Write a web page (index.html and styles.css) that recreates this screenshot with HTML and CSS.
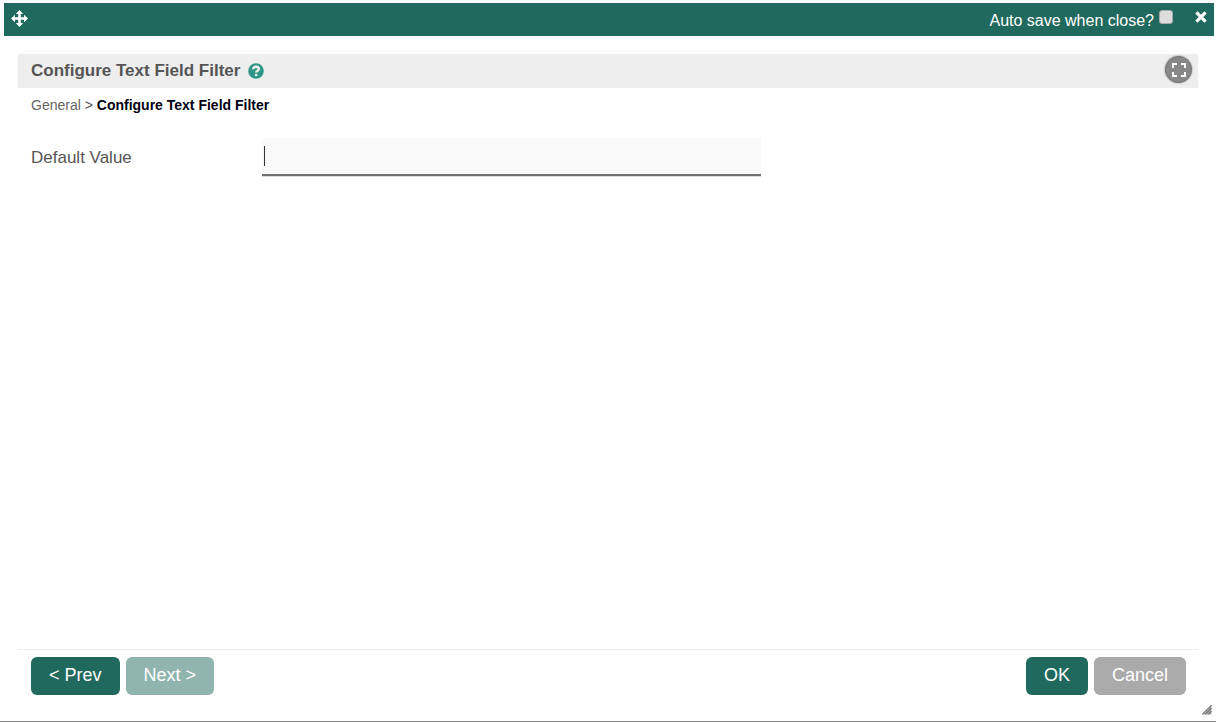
FILE: index.html
```html
<!DOCTYPE html>
<html lang="en">
  <head>
    <meta charset="UTF-8" />
    <meta name="viewport" content="width=device-width, initial-scale=1.0" />
    <title>Configure Text Field Filter</title>
    <link rel="stylesheet" href="styles.css">
  </head>
  <body>
    <div class="dialog">
      <header class="dialog-bar">
        <button class="icon-button" type="button" aria-label="Move">
          <svg width="17" height="17" viewBox="0 0 17 17" fill="#fff">
            <path d="M8.5 0 12.2 4H9.8v3.2H13V4.8L17 8.5 13 12.2V9.8H9.8V13h2.4L8.5 17 4.8 13h2.4V9.8H4v2.4L0 8.5 4 4.8v2.4h3.2V4H4.8z" />
          </svg>
        </button>
        <div class="bar-right">
          <label for="auto-save">Auto save when close?</label>
          <input type="checkbox" id="auto-save" />
          <button class="icon-button close-button" type="button" aria-label="Close">
            <svg width="12" height="12" viewBox="0 0 12 12" stroke="#fff" stroke-width="3.2">
              <path d="M1.4 1.4l9.2 9.2M10.6 1.4l-9.2 9.2" />
            </svg>
          </button>
        </div>
      </header>

      <form class="wizard">
        <div class="wizard-header">
          <h1>Configure Text Field Filter</h1>
          <a class="help-link" href="#" aria-label="Help">
            <svg width="16" height="16" viewBox="0 0 16 16">
              <circle cx="8" cy="8" r="7.8" fill="#2f978a" />
              <path d="M5.2 6.3C5.3 4.5 6.5 3.7 8 3.7c1.7 0 2.8.9 2.8 2.2 0 1.9-2.6 1.8-2.6 3.7" fill="none" stroke="#eee" stroke-width="2.4" />
              <path d="M7 10.8h2.3v2.3H7z" fill="#eee" />
            </svg>
          </a>
          <button class="expand-button" type="button" aria-label="Full screen">
            <svg width="16" height="14" viewBox="0 0 16 14" fill="none" stroke="#fff" stroke-width="2">
              <path d="M2 5V1h4M10 1h4v4M14 9v4h-4M6 13H2V9" />
            </svg>
          </button>
        </div>

        <nav class="breadcrumb">
          <a href="#">General</a> &gt; <strong>Configure Text Field Filter</strong>
        </nav>

        <div class="field">
          <label for="default-value">Default Value</label>
          <div class="field-input">
            <input type="text" id="default-value" />
            <span class="caret"></span>
          </div>
        </div>

        <div class="wizard-footer">
          <div class="button-group">
            <button class="button" type="button">&lt; Prev</button>
            <button class="button" type="button" disabled>Next &gt;</button>
          </div>
          <div class="button-group">
            <button class="button" type="submit">OK</button>
            <button class="button cancel" type="button">Cancel</button>
          </div>
        </div>
      </form>

      <svg class="resize-grip" width="10" height="10" viewBox="0 0 10 10">
        <path d="M0 9.5 9.5 0v9.5z" fill="#aaa" />
        <path d="M0 9.5 9.5 0M3 9.5 9.5 3M6 9.5 9.5 6" stroke="#555" />
      </svg>
    </div>
  </body>
</html>
```

FILE: styles.css
```css
* {
  box-sizing: border-box;
}
body {
  margin: 0;
  background-color: #fff;
  color: #555;
  font-family: "Liberation Sans", Arial, sans-serif;
  font-size: 17px;
}
.dialog {
  position: relative;
  display: flex;
  flex-direction: column;
  min-height: 100vh;
  padding: 3px 2px 0 4px;
  border-bottom: 1px solid #888;
}
.dialog-bar {
  display: flex;
  align-items: center;
  justify-content: space-between;
  height: 33px;
  padding: 0 7px;
  background-color: #20695e;
  color: #fff;
  font-size: 16px;
}
.icon-button {
  display: flex;
  padding: 0 0 2px;
  border: none;
  background: none;
  cursor: pointer;
}
.bar-right {
  display: flex;
  align-items: center;
}
.bar-right label {
  padding-top: 2px;
}
.bar-right input {
  appearance: none;
  width: 14px;
  height: 14px;
  margin: 0 22px 5px 5px;
  border: 1px solid #aaa;
  border-radius: 3px;
  background-color: #ddd;
}
.bar-right input:checked {
  background-color: #2f978a;
}
.close-button {
  padding: 0 0 6px;
}
.wizard {
  display: flex;
  flex: 1;
  flex-direction: column;
  margin: 18px 16px 26px 14px;
}
.wizard-header {
  display: flex;
  align-items: center;
  height: 34px;
  padding: 0 6px 0 13px;
  background-color: #eee;
}
h1 {
  margin: 0;
  font-size: 17px;
}
.help-link {
  display: flex;
  margin-left: 8px;
}
.expand-button {
  display: flex;
  align-items: center;
  justify-content: center;
  width: 27px;
  height: 27px;
  margin: 0 0 3px auto;
  padding: 0;
  border: 1px solid #777;
  border-radius: 50%;
  background-color: #888;
  box-shadow: 0 0 2px #777;
  cursor: pointer;
}
.breadcrumb {
  padding: 9px 13px;
  font-size: 14px;
  line-height: 16px;
}
.breadcrumb a {
  color: #666;
  text-decoration: none;
}
.breadcrumb strong {
  color: #001;
}
.field {
  display: flex;
  align-items: center;
  margin-top: 16px;
  padding: 0 13px;
}
.field label {
  width: 20%;
  padding-top: 2px;
}
.field-input {
  position: relative;
  width: 499px;
}
.field-input input {
  display: block;
  width: 100%;
  height: 38px;
  padding: 0 4px;
  border: none;
  border-bottom: 2px solid #707070;
  outline: none;
  background-color: #f9f9f9;
  box-shadow: 0 1px #ddd;
  color: #333;
  font: inherit;
}
.caret {
  position: absolute;
  top: 8px;
  left: 2px;
  width: 1px;
  height: 20px;
  background-color: #333;
}
.wizard-footer {
  display: flex;
  justify-content: space-between;
  margin-top: auto;
  padding: 7px 12px 0 13px;
  border-top: 1px solid #eee;
}
.button-group {
  display: flex;
  gap: 6px;
}
.button {
  height: 38px;
  padding: 0 18px 2px;
  border: none;
  border-radius: 6px;
  background-color: #20695e;
  color: #fff;
  font-family: inherit;
  font-size: 18px;
  cursor: pointer;
}
.button:disabled {
  background-color: #90b4ae;
  cursor: default;
}
.button.cancel {
  background-color: #aaa;
}
.resize-grip {
  position: absolute;
  right: 4px;
  bottom: 6px;
}
```
